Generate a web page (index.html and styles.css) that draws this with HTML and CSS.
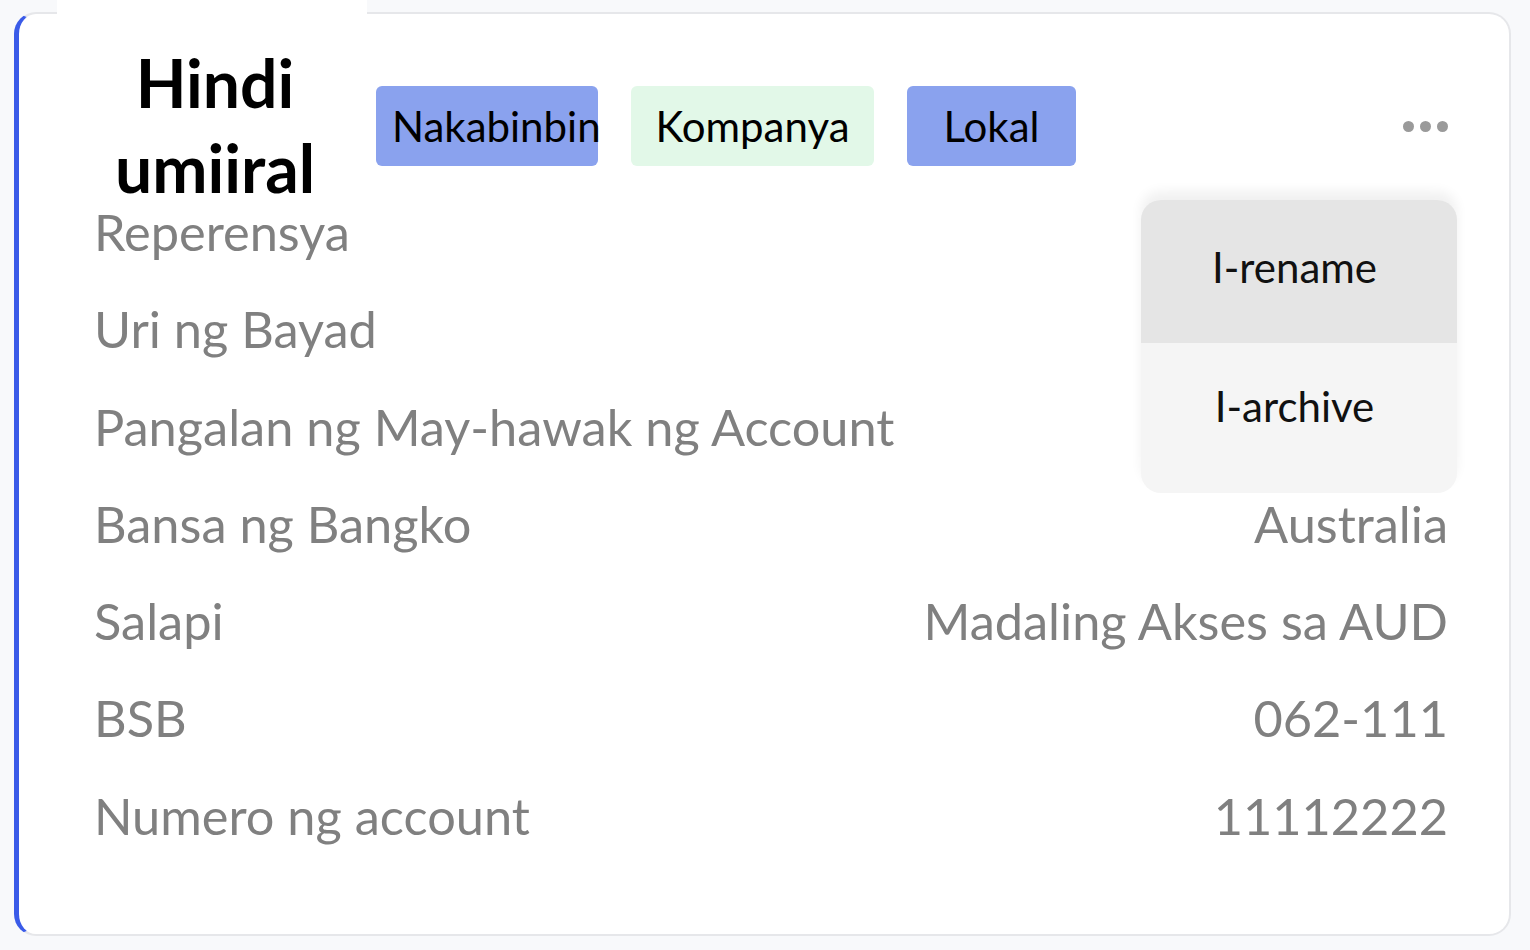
FILE: index.html
```
<!DOCTYPE html>
<html lang="tl">
<head>
<meta charset="utf-8">
<title>Account</title>
<link rel="stylesheet" href="styles.css">
</head>
<body>
<div class="card">
  <div class="header">
    <div class="title">Hindi<br>umiiral</div>
    <div class="badges">
      <span class="badge badge-blue badge-pending">Nakabinbin</span>
      <span class="badge badge-green badge-company">Kompanya</span>
      <span class="badge badge-blue badge-local">Lokal</span>
    </div>
    <div class="dots"><span></span><span></span><span></span></div>
  </div>
  <div class="rows">
    <div class="row"><span class="label">Reperensya</span><span class="value"></span></div>
    <div class="row"><span class="label">Uri ng Bayad</span><span class="value"></span></div>
    <div class="row"><span class="label">Pangalan ng May-hawak ng Account</span><span class="value"></span></div>
    <div class="row"><span class="label">Bansa ng Bangko</span><span class="value">Australia</span></div>
    <div class="row"><span class="label">Salapi</span><span class="value">Madaling Akses sa AUD</span></div>
    <div class="row"><span class="label">BSB</span><span class="value">062-111</span></div>
    <div class="row"><span class="label">Numero ng account</span><span class="value">11112222</span></div>
  </div>
  <div class="menu">
    <div class="menu-item menu-item-active">I-rename</div>
    <div class="menu-item">I-archive</div>
  </div>
</div>
</body>
</html>
```

FILE: styles.css
```
* { box-sizing: border-box; }
html, body { margin: 0; padding: 0; }
body {
  background: #f8f9fb;
  font-family: Lato, "Open Sans", sans-serif;
  width: 1530px;
  height: 950px;
  overflow: hidden;
  padding-top: 12px;
}
.card {
  position: relative;
  margin: 0 19px 0 14px;
  background: #ffffff;
  border: 2px solid #e6e7ea;
  border-left: 5px solid #3a5be8;
  border-radius: 22px;
  padding: 0 61px 70px 76px;
}
.header {
  display: flex;
  align-items: flex-start;
  height: 169px;
  margin-left: -38px;
}
.title {
  width: 310px;
  margin-top: -14px;
  padding-top: 40px;
  padding-left: 6px;
  padding-bottom: 8px;
  background: #ffffff;
  text-align: center;
  font-weight: 700;
  font-size: 66px;
  line-height: 85px;
  color: #000;
}
.badges {
  display: flex;
  gap: 33px;
  margin-top: 72px;
  margin-left: 9px;
}
.badge {
  display: flex;
  align-items: center;
  justify-content: center;
  height: 80px;
  border-radius: 6px;
  font-size: 42px;
  color: #000;
  white-space: nowrap;
}
.badge-blue { background: #8aa2ee; }
.badge-green { background: #e2f8e8; }
.badge-pending { width: 222px; justify-content: flex-start; padding-left: 16px; }
.badge-company { width: 243px; }
.badge-local { width: 169px; }
.dots {
  margin-left: auto;
  margin-top: 107px;
  display: flex;
  gap: 6px;
}
.dots span {
  width: 11px;
  height: 11px;
  border-radius: 50%;
  background: #9a9a9a;
}
.rows { display: flex; flex-direction: column; }
.row {
  display: flex;
  justify-content: space-between;
  height: 97.3px;
  line-height: 97px;
  font-size: 50.5px;
  color: #808080;
}
.label { margin-left: -1px; }
.menu {
  position: absolute;
  top: 186px;
  right: 52px;
  width: 316px;
  border-radius: 20px;
  overflow: hidden;
  background: #f5f5f5;
  box-shadow: 0 -9px 12px rgba(0, 0, 0, 0.06);
}
.menu-item {
  display: flex;
  align-items: center;
  justify-content: center;
  height: 150px;
  padding-bottom: 24px;
  padding-right: 9px;
  font-size: 42px;
  color: #111;
}
.menu-item-active {
  background: #e5e5e5;
  height: 143px;
  padding-bottom: 10px;
}
```
